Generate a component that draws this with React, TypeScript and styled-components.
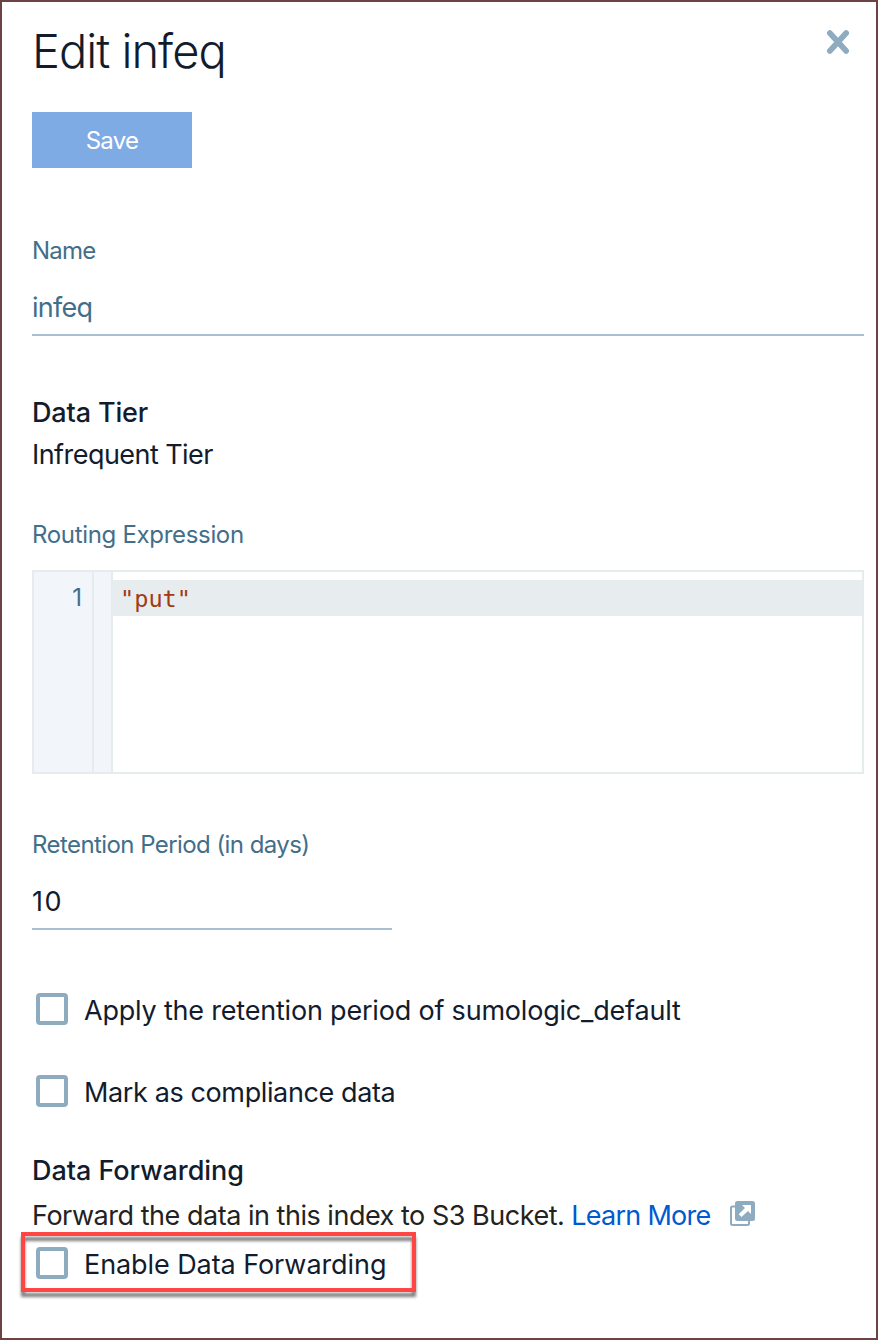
import React from "react";
import styled, { createGlobalStyle } from "styled-components";

const Global = createGlobalStyle`
  *, *::before, *::after { box-sizing: border-box; }
  body { margin: 0; background: #fff; }
`;

const Panel = styled.main`
  display: flex;
  flex-direction: column;
  width: 878px;
  height: 1340px;
  padding: 21px 12px 0 30px;
  border: 2px solid #6d4244;
  background: #fff;
  color: #121c2d;
  font-family: "Inter", "Liberation Sans", sans-serif;
  font-size: 27px;
  line-height: 42px;
  white-space: nowrap;
`;

const Header = styled.header`
  display: flex;
  justify-content: space-between;
  align-items: flex-start;
`;

const Title = styled.h1`
  margin: 0;
  font-size: 47px;
  font-weight: 300;
  line-height: 56px;
  letter-spacing: -1px;
`;

const CloseButton = styled.button`
  display: flex;
  margin: 6px 14px 0 0;
  padding: 0;
  border: 0;
  background: none;
`;

const SaveButton = styled.button`
  width: 160px;
  height: 56px;
  margin-top: 33px;
  padding: 2px 0 0;
  border: 0;
  background: #7fabe5;
  color: #fff;
  font: 400 24px/54px "Inter", "Liberation Sans", sans-serif;
  letter-spacing: -0.7px;
`;

const Label = styled.label<{ $top: number; $track: number }>`
  display: block;
  margin-top: ${(p) => p.$top}px;
  color: #436e8a;
  font-size: 24px;
  line-height: 30px;
  letter-spacing: ${(p) => p.$track}px;
`;

const Field = styled.input<{ $width: string; $track: number; $muted?: boolean }>`
  display: block;
  width: ${(p) => p.$width};
  height: 49px;
  margin-top: 21px;
  padding: 0 0 7px;
  border: 0;
  border-bottom: 2px solid #a9c0d3;
  border-radius: 0;
  outline: 0;
  background: none;
  color: ${(p) => (p.$muted ? "#436e8a" : "#121c2d")};
  font: 400 27px/40px "Inter", "Liberation Sans", sans-serif;
  letter-spacing: ${(p) => p.$track}px;
`;

const Heading = styled.h2<{ $top: number; $track: number }>`
  margin: ${(p) => p.$top}px 0 0;
  font-size: 27px;
  font-weight: 550;
  line-height: 42px;
  letter-spacing: ${(p) => p.$track}px;
`;

const Value = styled.div`
  letter-spacing: -0.55px;
`;

const Editor = styled.div`
  display: flex;
  height: 204px;
  margin-top: 20px;
  border: 2px solid #e6ecee;
`;

const LineNumbers = styled.div`
  width: 60px;
  padding: 9px 10px 0 0;
  border-right: 2px solid #e6ecee;
  background: #f2f6fa;
  color: #436e8a;
  font-size: 24px;
  line-height: 34px;
  text-align: right;
`;

const FoldGutter = styled.div`
  width: 19px;
  border-right: 2px solid #e6ecee;
  background: #f2f6fa;
`;

const Code = styled.div`
  flex: 1;
  padding-top: 8px;
`;

const ActiveLine = styled.div`
  height: 36px;
  padding-left: 7px;
  background: #e7ecee;
  color: #a33a12;
  font: 400 23.6px/39px "DejaVu Sans Mono", "Liberation Mono", monospace;
`;

const CheckRow = styled.label<{ $top: number; $track: number }>`
  display: flex;
  gap: 16px;
  height: 34px;
  margin: ${(p) => p.$top}px 0 0 4px;
  line-height: 36px;
  letter-spacing: ${(p) => p.$track}px;
`;

const Box = styled.span`
  width: 32px;
  height: 32px;
  border: 4px solid #8fabbf;
  border-radius: 4px;
  background: #fff;
`;

const Description = styled.div`
  display: flex;
  align-items: flex-start;
  height: 42px;
  margin-top: 3px;
  color: #222;
  letter-spacing: -0.48px;
`;

const Link = styled.a`
  margin: 0 19px 0 7px;
  color: #005ad0;
  letter-spacing: -0.74px;
`;

const Highlight = styled.div`
  position: relative;
  width: 395px;
  height: 60px;
  margin: -5px 0 0 -11px;
  padding: 15px 0 0 11px;

  &::after {
    content: "";
    position: absolute;
    inset: 0;
    border: 4px solid #ff4644;
    filter: drop-shadow(0 5px 1.5px rgba(0, 0, 0, 0.5));
    pointer-events: none;
  }
`;

const CloseIcon = () => (
  <svg width="24" height="26" viewBox="0 0 24 26" fill="none">
    <path d="M3.8 4L20.2 22M20.2 4L3.8 22" stroke="#8fabbf" strokeWidth="5.6" strokeLinecap="round" />
  </svg>
);

const ExternalSvg = styled.svg`
  flex: none;
  margin-top: 6px;
`;

const ExternalIcon = () => (
  <ExternalSvg width="26" height="26" viewBox="0 0 26 26" fill="none">
    <path d="M5 5.5H2.5Q1 5.5 1 7V22.5Q1 24 2.5 24H17.5Q19 24 19 22.5V20" stroke="#8fabbf" strokeWidth="2" />
    <rect x="5" y="0" width="20" height="20" rx="2.5" fill="#8fabbf" />
    <path d="M12 4H21V13L18 10L11.5 16L8.7 13.2L15 7Z" fill="#fff" />
  </ExternalSvg>
);

export default function App() {
  return (
    <>
      <Global />
      <Panel>
        <Header>
          <Title>Edit infeq</Title>
          <CloseButton aria-label="Close">
            <CloseIcon />
          </CloseButton>
        </Header>
        <SaveButton>Save</SaveButton>

        <Label $top={68} $track={-0.75}>Name</Label>
        <Field $width="100%" $track={-0.75} $muted defaultValue="infeq" />

        <Heading $top={56} $track={-0.15}>Data Tier</Heading>
        <Value>Infrequent Tier</Value>

        <Label $top={44} $track={-0.32}>Routing Expression</Label>
        <Editor>
          <LineNumbers>1</LineNumbers>
          <FoldGutter />
          <Code>
            <ActiveLine>"put"</ActiveLine>
          </Code>
        </Editor>

        <Label $top={56} $track={-0.57}>Retention Period (in days)</Label>
        <Field $width="360px" $track={1.5} defaultValue="10" />

        <CheckRow $top={63} $track={-0.2}>
          <Box />
          Apply the retention period of sumologic_default
        </CheckRow>
        <CheckRow $top={48} $track={-0.38}>
          <Box />
          Mark as compliance data
        </CheckRow>

        <Heading $top={41} $track={-0.05}>Data Forwarding</Heading>
        <Description>
          Forward the data in this index to S3 Bucket.
          <Link>Learn More</Link>
          <ExternalIcon />
        </Description>
        <Highlight>
          <CheckRow $top={0} $track={-0.08}>
            <Box />
            Enable Data Forwarding
          </CheckRow>
        </Highlight>
      </Panel>
    </>
  );
}
